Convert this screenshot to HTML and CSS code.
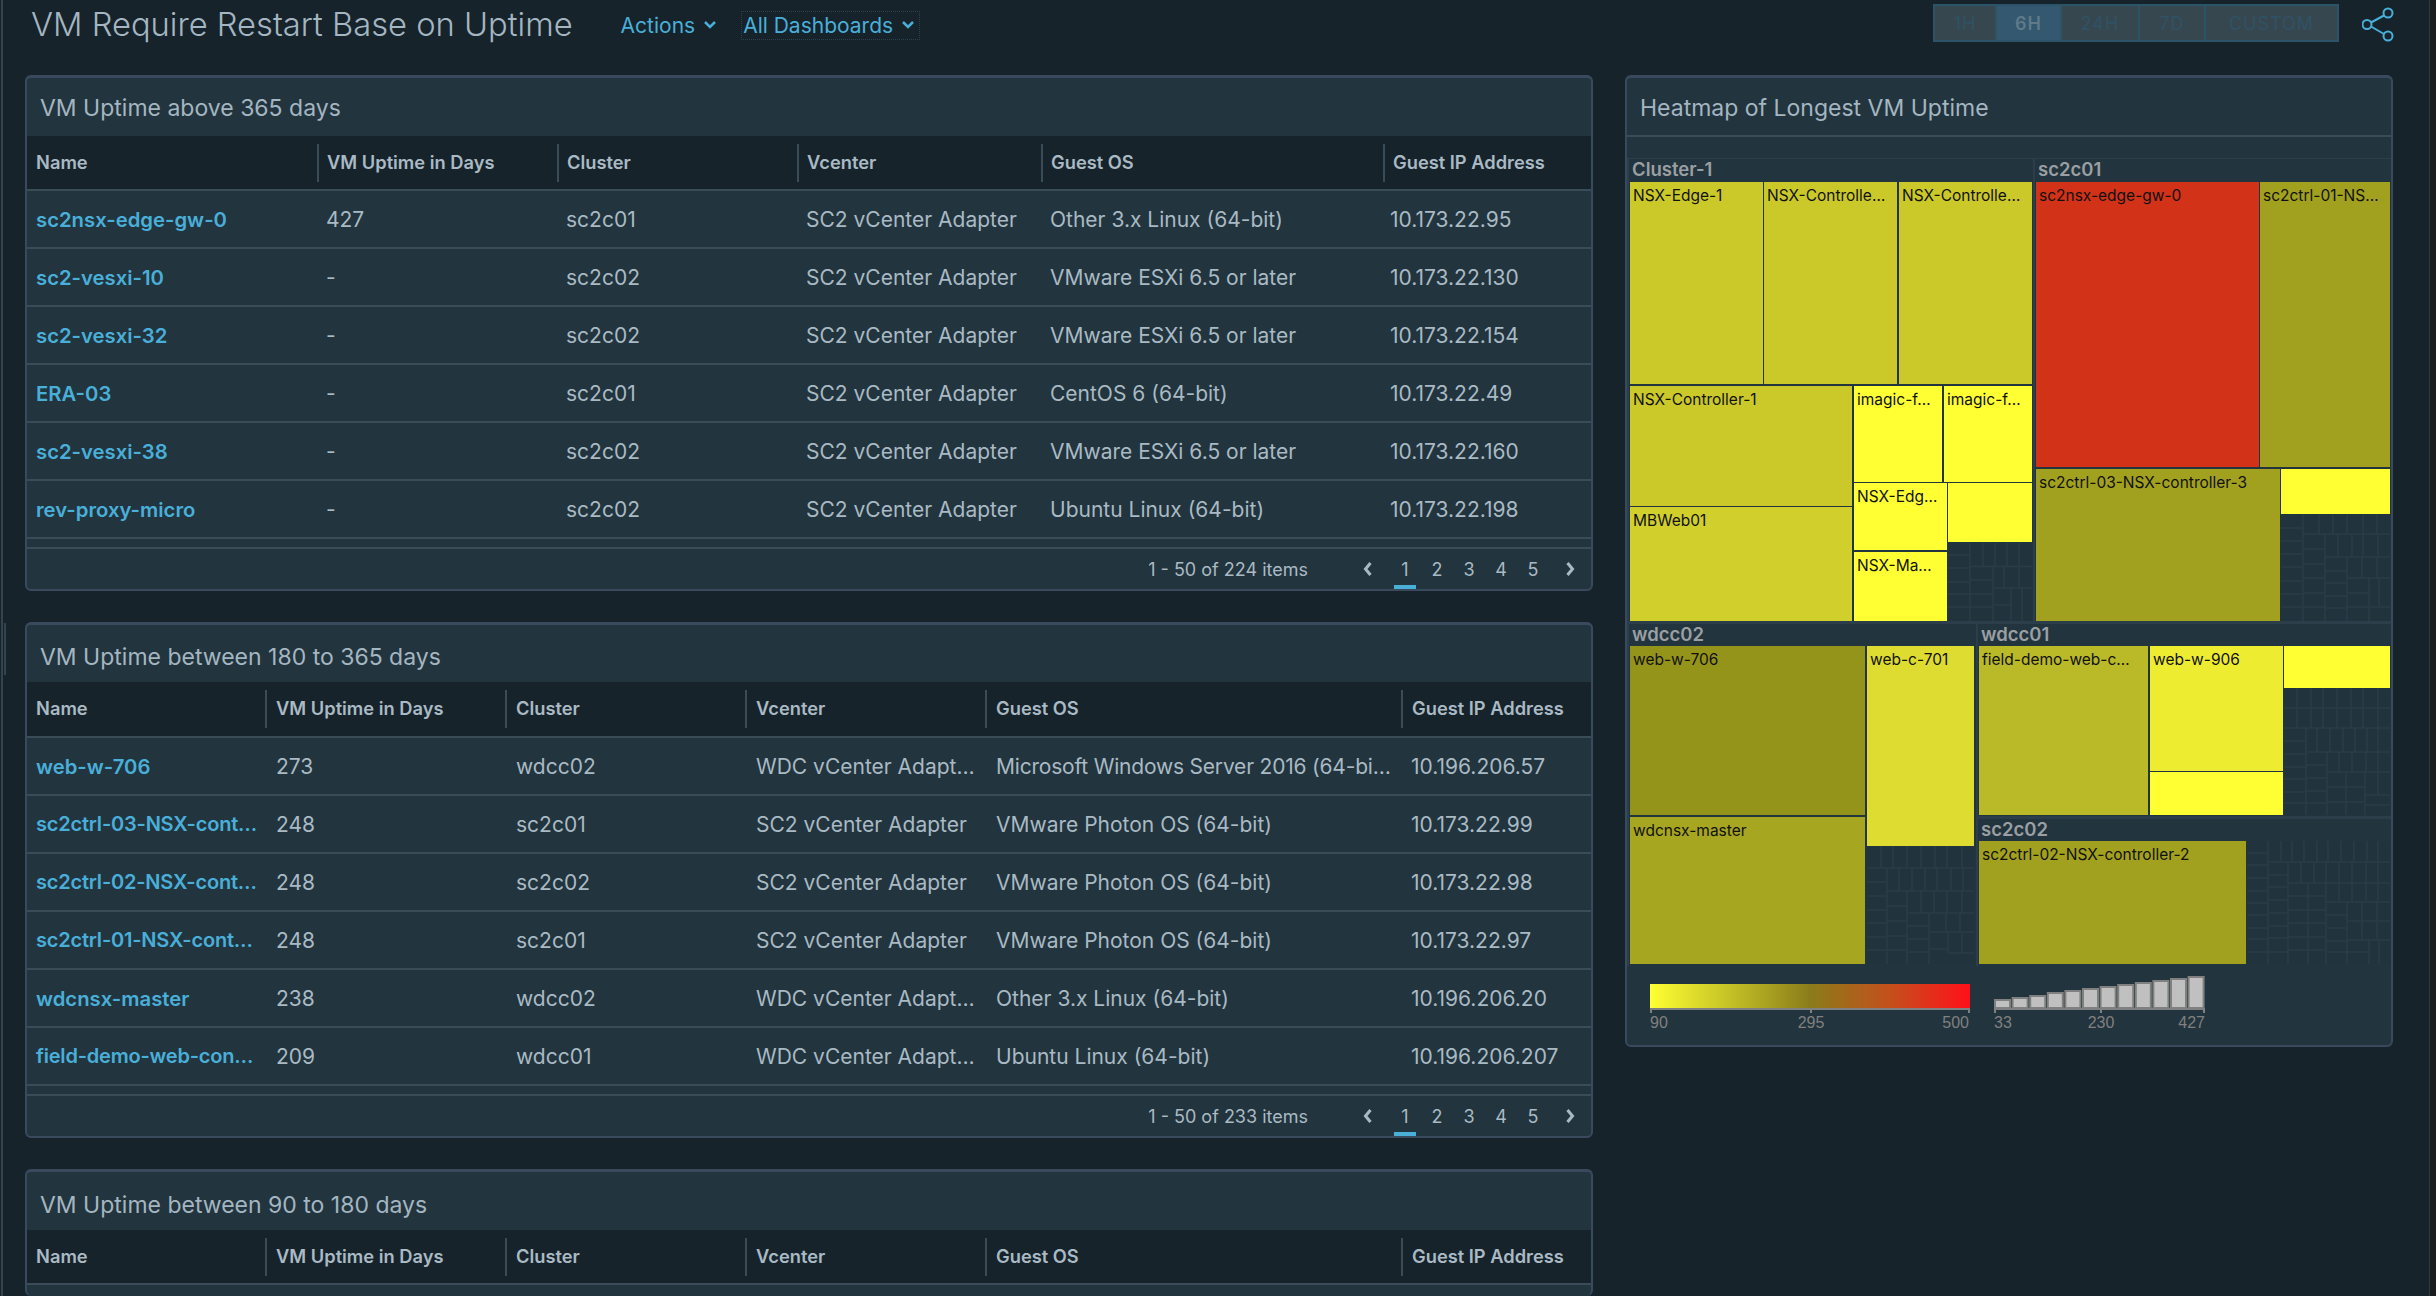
FILE: index.html
```html
<!DOCTYPE html>
<html lang="en">
<head>
<meta charset="utf-8">
<title>VM Require Restart Base on Uptime</title>
<link rel="stylesheet" href="styles.css">
</head>
<body>
<div class="edge-left"></div>
<div class="edge-handle"></div>
<div class="edge-right"></div>
<header class="topbar">
  <h1 class="page-title">VM Require Restart Base on Uptime</h1>
  <a class="menu menu-actions">Actions <svg class="chev" viewBox="0 0 14 10"><path d="M2 2l5 5 5-5"/></svg></a>
  <a class="menu menu-dash">All Dashboards <svg class="chev" viewBox="0 0 14 10"><path d="M2 2l5 5 5-5"/></svg></a>
  <div class="range">
    <span class="range-btn w1">1H</span>
    <span class="range-btn w2 on">6H</span>
    <span class="range-btn w3">24H</span>
    <span class="range-btn w4">7D</span>
    <span class="range-btn w5">CUSTOM</span>
  </div>
  <svg class="share" viewBox="0 0 32 36"><g><path d="M22 8.500L9 15.500M9 19.500L22 27"/><circle cx="26" cy="6" r="4.500"/><circle cx="5" cy="17.500" r="4.500"/><circle cx="26" cy="29" r="4.500"/></g></svg>
</header>
<main class="board">
  <div class="left-col">
    <section class="card">
      <h2 class="card-title">VM Uptime above 365 days</h2>
      <div class="row head cols-a"><div class="th">Name</div><div class="th">VM Uptime in Days</div><div class="th">Cluster</div><div class="th">Vcenter</div><div class="th">Guest OS</div><div class="th">Guest IP Address</div></div>
      <div class="row cols-a"><a class="td link">sc2nsx-edge-gw-0</a><div class="td">427</div><div class="td">sc2c01</div><div class="td">SC2 vCenter Adapter</div><div class="td">Other 3.x Linux (64-bit)</div><div class="td">10.173.22.95</div></div>
      <div class="row cols-a"><a class="td link">sc2-vesxi-10</a><div class="td">-</div><div class="td">sc2c02</div><div class="td">SC2 vCenter Adapter</div><div class="td">VMware ESXi 6.5 or later</div><div class="td">10.173.22.130</div></div>
      <div class="row cols-a"><a class="td link">sc2-vesxi-32</a><div class="td">-</div><div class="td">sc2c02</div><div class="td">SC2 vCenter Adapter</div><div class="td">VMware ESXi 6.5 or later</div><div class="td">10.173.22.154</div></div>
      <div class="row cols-a"><a class="td link">ERA-03</a><div class="td">-</div><div class="td">sc2c01</div><div class="td">SC2 vCenter Adapter</div><div class="td">CentOS 6 (64-bit)</div><div class="td">10.173.22.49</div></div>
      <div class="row cols-a"><a class="td link">sc2-vesxi-38</a><div class="td">-</div><div class="td">sc2c02</div><div class="td">SC2 vCenter Adapter</div><div class="td">VMware ESXi 6.5 or later</div><div class="td">10.173.22.160</div></div>
      <div class="row cols-a"><a class="td link">rev-proxy-micro</a><div class="td">-</div><div class="td">sc2c02</div><div class="td">SC2 vCenter Adapter</div><div class="td">Ubuntu Linux (64-bit)</div><div class="td">10.173.22.198</div></div>
      <footer class="foot">
        <span class="count">1 - 50 of 224 items</span>
        <span class="pg arrow prev"><svg viewBox="0 0 10 16"><path d="M7.500 2L2.500 8l5 6"/></svg></span>
        <span class="pg on">1</span><span class="pg">2</span><span class="pg">3</span><span class="pg">4</span><span class="pg">5</span>
        <span class="pg arrow next"><svg viewBox="0 0 10 16"><path d="M2.500 2l5 6-5 6"/></svg></span>
      </footer>
    </section>
    <section class="card card-mid">
      <h2 class="card-title">VM Uptime between 180 to 365 days</h2>
      <div class="row head cols-b"><div class="th">Name</div><div class="th">VM Uptime in Days</div><div class="th">Cluster</div><div class="th">Vcenter</div><div class="th">Guest OS</div><div class="th">Guest IP Address</div></div>
      <div class="row cols-b"><a class="td link">web-w-706</a><div class="td">273</div><div class="td">wdcc02</div><div class="td">WDC vCenter Adapt…</div><div class="td snug">Microsoft Windows Server 2016 (64-bi…</div><div class="td">10.196.206.57</div></div>
      <div class="row cols-b"><a class="td link clip">sc2ctrl-03-NSX-cont…</a><div class="td">248</div><div class="td">sc2c01</div><div class="td">SC2 vCenter Adapter</div><div class="td">VMware Photon OS (64-bit)</div><div class="td">10.173.22.99</div></div>
      <div class="row cols-b"><a class="td link clip">sc2ctrl-02-NSX-cont…</a><div class="td">248</div><div class="td">sc2c02</div><div class="td">SC2 vCenter Adapter</div><div class="td">VMware Photon OS (64-bit)</div><div class="td">10.173.22.98</div></div>
      <div class="row cols-b"><a class="td link clip">sc2ctrl-01-NSX-cont…</a><div class="td">248</div><div class="td">sc2c01</div><div class="td">SC2 vCenter Adapter</div><div class="td">VMware Photon OS (64-bit)</div><div class="td">10.173.22.97</div></div>
      <div class="row cols-b"><a class="td link">wdcnsx-master</a><div class="td">238</div><div class="td">wdcc02</div><div class="td">WDC vCenter Adapt…</div><div class="td">Other 3.x Linux (64-bit)</div><div class="td">10.196.206.20</div></div>
      <div class="row cols-b"><a class="td link clip">field-demo-web-con…</a><div class="td">209</div><div class="td">wdcc01</div><div class="td">WDC vCenter Adapt…</div><div class="td">Ubuntu Linux (64-bit)</div><div class="td">10.196.206.207</div></div>
      <footer class="foot">
        <span class="count">1 - 50 of 233 items</span>
        <span class="pg arrow prev"><svg viewBox="0 0 10 16"><path d="M7.500 2L2.500 8l5 6"/></svg></span>
        <span class="pg on">1</span><span class="pg">2</span><span class="pg">3</span><span class="pg">4</span><span class="pg">5</span>
        <span class="pg arrow next"><svg viewBox="0 0 10 16"><path d="M2.500 2l5 6-5 6"/></svg></span>
      </footer>
    </section>
    <section class="card card-open">
      <h2 class="card-title">VM Uptime between 90 to 180 days</h2>
      <div class="row head cols-b"><div class="th">Name</div><div class="th">VM Uptime in Days</div><div class="th">Cluster</div><div class="th">Vcenter</div><div class="th">Guest OS</div><div class="th">Guest IP Address</div></div>
    </section>
  </div>
  <section class="card heat-card">
    <h2 class="card-title heat-title">Heatmap of Longest VM Uptime</h2>
    <div class="heat-band"></div>
    <div class="treemap">
      <div class="grp" style="left:0;top:0;width:406px;height:463px"><span>Cluster-1</span></div>
      <div class="grp" style="left:406px;top:0;width:359px;height:463px"><span>sc2c01</span></div>
      <div class="grp" style="left:0;top:465px;width:349px;height:343px"><span>wdcc02</span></div>
      <div class="grp" style="left:349px;top:465px;width:416px;height:193px"><span>wdcc01</span></div>
      <div class="grp" style="left:349px;top:660px;width:416px;height:148px"><span>sc2c02</span></div>

      <div class="tile" style="left:3px;top:24px;width:133px;height:202px;background:#cbc92a">NSX-Edge-1</div>
      <div class="tile" style="left:137px;top:24px;width:133px;height:202px;background:#cbc92a">NSX-Controlle…</div>
      <div class="tile" style="left:272px;top:24px;width:133px;height:202px;background:#cbc92a">NSX-Controlle…</div>
      <div class="tile" style="left:3px;top:228px;width:222px;height:120px;background:#cbc92a">NSX-Controller-1</div>
      <div class="tile" style="left:3px;top:349px;width:222px;height:114px;background:#d1cf2b">MBWeb01</div>
      <div class="tile" style="left:227px;top:228px;width:88px;height:96px;background:#ffff33">imagic-f…</div>
      <div class="tile" style="left:317px;top:228px;width:88px;height:96px;background:#ffff33">imagic-f…</div>
      <div class="tile" style="left:227px;top:325px;width:93px;height:67px;background:#ffff33">NSX-Edg…</div>
      <div class="tile" style="left:321px;top:325px;width:84px;height:59px;background:#ffff33"></div>
      <div class="tile" style="left:227px;top:394px;width:93px;height:69px;background:#ffff33">NSX-Ma…</div>

      <div class="tile" style="left:409px;top:24px;width:223px;height:285px;background:#d23218">sc2nsx-edge-gw-0</div>
      <div class="tile" style="left:633px;top:24px;width:130px;height:285px;background:#a2a11f">sc2ctrl-01-NS…</div>
      <div class="tile" style="left:409px;top:311px;width:244px;height:152px;background:#a2a11f">sc2ctrl-03-NSX-controller-3</div>
      <div class="tile" style="left:654px;top:311px;width:109px;height:45px;background:#ffff33"></div>

      <div class="tile" style="left:3px;top:488px;width:235px;height:169px;background:#95941a">web-w-706</div>
      <div class="tile" style="left:3px;top:659px;width:235px;height:147px;background:#a7a620">wdcnsx-master</div>
      <div class="tile" style="left:240px;top:488px;width:107px;height:200px;background:#dedc30">web-c-701</div>

      <div class="tile" style="left:352px;top:488px;width:169px;height:169px;background:#bab927">field-demo-web-c…</div>
      <div class="tile" style="left:523px;top:488px;width:133px;height:125px;background:#edec31">web-w-906</div>
      <div class="tile" style="left:523px;top:614px;width:133px;height:43px;background:#ffff33"></div>
      <div class="tile" style="left:657px;top:488px;width:106px;height:42px;background:#ffff33"></div>

      <div class="tile" style="left:352px;top:683px;width:267px;height:123px;background:#a2a11f">sc2ctrl-02-NSX-controller-2</div>

      <svg class="dim" viewBox="1627 158 766 808">
        <rect class="dim-bg" x="1948" y="543" width="84" height="78"/>
        <rect class="dim-bg" x="2281" y="515" width="109" height="106"/>
        <rect class="dim-bg" x="1867" y="847" width="107" height="117"/>
        <rect class="dim-bg" x="2284" y="689" width="106" height="126"/>
        <rect class="dim-bg" x="2247" y="841" width="143" height="123"/>
        <path class="dim-ln" d="M1970 543V621M1947 555H1970M1947 568H1970M1947 582H1970M1947 594H1970M1947 607H1970M1970 566.500H2032M1983 543V566M1995 543V566M2007 543V566M2019 543V566M1993 566V621M1970 580H1993M1970 594H1993M1970 607H1993M2004 566V588M2019 566V588M1993 588H2032M2011 588V621M2022 588V621M1993 605H2011"/>
        <path class="dim-ln" d="M2303 514V621M2281 528H2303M2281 541H2303M2281 554H2303M2281 567H2303M2281 581H2303M2281 594H2303M2281 607H2303M2303 534H2390M2319 514V534M2333 514V534M2347 514V534M2363 514V534M2377 514V534M2325 534V621M2303 549H2325M2303 564H2325M2303 578H2325M2303 593H2325M2303 607H2325M2338 534V557M2352 534V557M2363 534V557M2378 534V557M2325 557H2390M2347 557V621M2325 571H2347M2325 583H2347M2325 596H2347M2325 608H2347M2362 557V578M2377 557V578M2347 578H2390M2369 578V621M2347 593H2369M2347 607H2369M2379 578V607M2369 607H2390"/>
        <path class="dim-ln" d="M1881 846V868M1893 846V868M1907 846V868M1921 846V868M1935 846V868M1947 846V868M1962 846V868M1867 868H1974M1887 868V964M1867 882H1887M1867 896H1887M1867 910H1887M1867 923H1887M1867 937H1887M1867 950H1887M1899 868V891M1912 868V891M1925 868V891M1937 868V891M1951 868V891M1963 868V891M1887 891H1974M1887 906H1907M1887 921H1907M1887 936H1907M1887 950H1907M1907 891V964M1921 891V913M1934 891V913M1947 891V913M1962 891V913M1907 913H1974M1907 926H1929M1907 939H1929M1907 952H1929M1929 913V964M1946 913V932M1960 913V932M1929 932H1974M1948 932V953M1962 932V953M1929 949H1948M1948 953H1974"/>
        <path class="dim-ln" d="M2297 688V728M2311 688V728M2323 688V728M2337 688V728M2351 688V728M2363 688V728M2378 688V728M2284 708H2390M2284 728H2390M2306 728V815M2284 741H2306M2284 754H2306M2284 767H2306M2284 779H2306M2284 792H2306M2284 803H2306M2317 728V752M2330 728V752M2343 728V752M2355 728V752M2367 728V752M2378 728V752M2306 752H2390M2327 752V815M2306 765H2327M2306 778H2327M2306 791H2327M2306 803H2327M2339 752V772M2352 752V772M2366 752V772M2378 752V772M2327 772H2390M2346 772V815M2365 772V815M2327 787H2365M2327 802H2365M2378 772V795M2365 795H2390M2365 805H2390"/>
        <path class="dim-ln" d="M2268 841V964M2247 853H2268M2247 865H2268M2247 878H2268M2247 891H2268M2247 903H2268M2247 915H2268M2247 928H2268M2247 939H2268M2247 952H2268M2281 841V862M2292 841V862M2304 841V862M2317 841V862M2328 841V862M2341 841V862M2354 841V862M2367 841V862M2378 841V862M2268 862H2390M2288 862V964M2268 875H2288M2268 887H2288M2268 900H2288M2268 913H2288M2268 926H2288M2268 938H2288M2268 952H2288M2301 862V883M2314 862V883M2326 862V964M2288 883H2326M2308 883V964M2288 896H2326M2288 910H2326M2288 923H2326M2288 937H2326M2288 950H2326M2339 862V902M2352 862V902M2366 862V902M2378 862V902M2326 883H2390M2326 902H2390M2326 915H2347M2326 928H2347M2326 941H2347M2326 952H2347M2347 902V964M2362 902V940M2377 902V940M2347 921H2390M2347 940H2390M2369 940V964M2347 952H2369M2379 940V964"/>
      </svg>
    </div>
    <svg class="legend" viewBox="1627 966 762 78">
      <defs>
        <linearGradient id="heat">
          <stop offset="0" stop-color="#ffff33"/>
          <stop offset="0.25" stop-color="#c4c126"/>
          <stop offset="0.5" stop-color="#8a7c1a"/>
          <stop offset="0.75" stop-color="#c4501c"/>
          <stop offset="1" stop-color="#ff1019"/>
        </linearGradient>
      </defs>
      <rect x="1650" y="984" width="320" height="24" fill="url(#heat)"/>
      <path class="axis" d="M1650 1009H1970M1651 1009V1013M1811 1009V1013M1969 1009V1013"/>
      <text class="tick" x="1650" y="1028">90</text>
      <text class="tick mid" x="1811" y="1028">295</text>
      <text class="tick end" x="1969" y="1028">500</text>
      <g class="bars">
        <rect x="1995" y="1000" width="15" height="8"/>
        <rect x="2012.600" y="998" width="15" height="10"/>
        <rect x="2030.200" y="996" width="15" height="12"/>
        <rect x="2047.800" y="993" width="15" height="15"/>
        <rect x="2065.400" y="991" width="15" height="17"/>
        <rect x="2083" y="989" width="15" height="19"/>
        <rect x="2100.600" y="987" width="15" height="21"/>
        <rect x="2118.200" y="985" width="15" height="23"/>
        <rect x="2135.800" y="983" width="15" height="25"/>
        <rect x="2153.400" y="981" width="15" height="27"/>
        <rect x="2171" y="979" width="15" height="29"/>
        <rect x="2188.600" y="977" width="15" height="31"/>
      </g>
      <path class="axis" d="M1994 1009H2205M1995 1009V1013M2101 1009V1013M2204 1009V1013"/>
      <text class="tick" x="1994" y="1028">33</text>
      <text class="tick mid" x="2101" y="1028">230</text>
      <text class="tick end" x="2205" y="1028">427</text>
    </svg>
  </section>
</main>
</body>
</html>
```
FILE: styles.css
```css
* { box-sizing: border-box; }
html, body { margin: 0; height: 1296px; overflow: hidden; background: #17232b; }
body { font-family: Inter, "Noto Sans", sans-serif; color: #a9bac4; position: relative; width: 2436px; }

.edge-left { position: absolute; left: 1px; top: 0; bottom: 0; width: 2px; background: #33444e; }
.edge-handle { position: absolute; left: 4px; top: 623px; width: 2px; height: 52px; background: #33444e; }
.edge-right { position: absolute; right: 0; top: 0; bottom: 0; width: 7px; background: #1b1c1d; border-left: 1px solid #2c3a42; }

.topbar { display: flex; align-items: center; height: 50px; margin-bottom: 25px; padding: 0 42px 0 31px; }
.page-title { margin: 0 48px 2px 0; font-size: 32.700px; font-weight: 300; color: #a4b6c1; white-space: nowrap; }
.menu { display: flex; align-items: center; gap: 8px; font-size: 21px; color: #49afd9; white-space: nowrap; }
.menu-actions { margin-right: 25px; }
.menu-dash { height: 27px; padding: 0 4px 0 1px; outline: 1px dotted #2d4250; }
.chev { width: 14px; height: 10px; fill: none; stroke: #49afd9; stroke-width: 2.500; }

.range { display: flex; gap: 2px; margin: 0 0 4px auto; height: 38px; padding: 2px; background: #2b5468; font-size: 18px; letter-spacing: 1px; }
.range-btn { display: flex; align-items: center; justify-content: center; background: #37474f; color: #2f5266; }
.range-btn.on { background: #33586f; color: #5f7a88; font-weight: 600; }
.w1 { width: 60px; } .w2 { width: 63px; } .w3 { width: 76px; } .w4 { width: 64px; } .w5 { width: 131px; }
.share { width: 32px; height: 36px; margin-left: 23px; fill: none; stroke: #49afd9; stroke-width: 2; }

.board { display: flex; gap: 32px; padding-left: 25px; align-items: flex-start; }
.left-col { display: flex; flex-direction: column; gap: 31px; width: 1568px; flex: none; }

.card { background: #22343d; border: 2px solid #3a4a5e; border-top-width: 3px; border-radius: 6px; overflow: hidden; }
.card-title { height: 58px; margin: 0; padding: 16px 0 0 13px; font-size: 23px; line-height: 28px; font-weight: 400; color: #a4b6c1; white-space: nowrap; }
.card-mid .card-title { height: 57px; padding-top: 18px; }
.card-open .card-title { padding-top: 19px; }

.row { display: grid; height: 58px; align-items: center; border-bottom: 2px solid #3b4c59; }
.cols-a { grid-template-columns: 290px 240px 240px 244px 342px 1fr; }
.cols-b { grid-template-columns: 238px 240px 240px 240px 416px 1fr; }
.head { height: 55px; background: #17232b; }
.card-mid .head { height: 56px; }
.th { height: 38px; padding-left: 8px; border-left: 2px solid #3b4c59; font-size: 18.300px; line-height: 36px; font-weight: 600; color: #a9bac4; white-space: nowrap; }
.cols-b .th { padding-left: 9px; }
.head .th:first-child { padding-left: 9px; border-left: 0; }
.td { font-size: 21px; color: #a9bac4; white-space: nowrap; overflow: hidden; }
.cols-a .td { padding-left: 9px; }
.cols-a .td:last-child { padding-left: 7px; }
.cols-b .td { padding-left: 11px; }
.cols-b .td:last-child { padding-left: 10px; }
.td.snug { letter-spacing: -0.200px; }
.row .td.link { padding-left: 9px; font-size: 20.300px; color: #49afd9; font-weight: 600; }
.row .td.clip { font-size: 20px; letter-spacing: -0.200px; }

.foot { display: flex; align-items: stretch; justify-content: flex-end; height: 42px; margin-top: 8px; padding-right: 10px; border-top: 2px solid #3b4c59; font-size: 18px; line-height: 42px; }
.count { margin-right: 49px; white-space: nowrap; }
.pg { width: 22px; margin: 0 5px; text-align: center; }
.pg.on { height: 40px; border-bottom: 4px solid #49afd9; }
.pg.arrow { display: flex; align-items: center; justify-content: center; }
.pg.prev { margin: 0 10px 0 0; }
.pg.next { margin: 0 0 0 10px; }
.pg.arrow svg { width: 10px; height: 16px; fill: none; stroke: #a9bac4; stroke-width: 3; }

.card-open { height: 127px; border-bottom: 0; }

.heat-card { width: 768px; flex: none; height: 972px; }
.heat-title { height: 59px; border-bottom: 2px solid #3b4c59; }
.heat-band { height: 21px; }
.treemap { position: relative; width: 766px; height: 808px; background: #2b3e49; }
.grp { position: absolute; background: #22343d; border-top: 1px solid #2b3e49; border-left: 2px solid #2b3e49; }
.grp span { display: block; padding-left: 3px; font-size: 18.500px; line-height: 20px; font-weight: 600; color: #9a9fa3; }
.tile { position: absolute; padding: 3px 0 0 3px; font-size: 15.500px; line-height: 22px; color: #111; white-space: nowrap; overflow: hidden; }
.dim { position: absolute; left: 0; top: 0; width: 766px; height: 808px; }
.dim-bg { fill: #21343d; }
.dim-ln { fill: none; stroke: #2a3c47; stroke-width: 1.600; }

.legend { display: block; width: 762px; height: 78px; }
.axis { fill: none; stroke: #808080; stroke-width: 2; }
.tick { font-family: "Liberation Sans", sans-serif; font-size: 16px; fill: #808080; }
.tick.mid { text-anchor: middle; }
.tick.end { text-anchor: end; }
.bars rect { fill: #c0c0c0; stroke: #808080; stroke-width: 2; }
```
